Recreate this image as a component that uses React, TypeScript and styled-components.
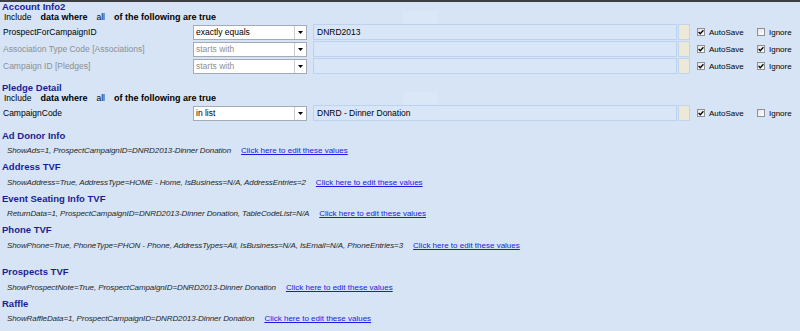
import React from "react";
import styled, { createGlobalStyle } from "styled-components";

const GlobalStyle = createGlobalStyle`
  html, body { margin: 0; padding: 0; background: #d6e4f5; }
  body { font-family: "Liberation Sans", Arial, sans-serif; font-size: 8px; color: #000; }
`;

const Page = styled.div`
  width: 800px;
  height: 331px;
  box-sizing: border-box;
  border-top: 2px solid #3d3f42;
  background: #d6e4f5;
  overflow: hidden;
  display: flex;
  flex-direction: column;
`;

const Title = styled.div<{ $h: number; $mt?: number }>`
  height: ${(p) => p.$h}px;
  line-height: ${(p) => p.$h}px;
  margin-top: ${(p) => p.$mt ?? 0}px;
  padding-left: 2px;
  font-size: 9.5px;
  font-weight: bold;
  color: #1c1c96;
  white-space: nowrap;
`;

const IncludeRow = styled.div`
  height: 10px;
  line-height: 10px;
  display: flex;
  align-items: center;
  gap: 9px;
  padding-left: 4px;
  margin-bottom: 2px;
  font-size: 8.5px;
  white-space: nowrap;
`;

const Strong = styled.span`
  font-weight: bold;
  font-size: 9px;
`;

const GhostPatch = styled.span`
  margin-left: 178px;
  width: 35px;
  height: 13px;
  background: #d9e7f6;
`;

const FilterList = styled.div`
  display: flex;
  flex-direction: column;
  gap: 1px;
`;

const Row = styled.div`
  height: 16px;
  display: flex;
  align-items: center;
`;

const Label = styled.div<{ $disabled?: boolean }>`
  width: 193px;
  box-sizing: border-box;
  padding-left: 3px;
  font-size: 8.5px;
  color: ${(p) => (p.$disabled ? "#8d8f93" : "#000")};
  white-space: nowrap;
`;

const Select = styled.div`
  width: 114px;
  height: 15px;
  box-sizing: border-box;
  border: 1px solid #a4abb6;
  background: #fff;
  display: flex;
`;

const SelectText = styled.div<{ $disabled?: boolean }>`
  flex: 1;
  padding-left: 2px;
  line-height: 13px;
  font-size: 8.5px;
  color: ${(p) => (p.$disabled ? "#8d8f93" : "#000")};
  white-space: nowrap;
`;

const SelectButton = styled.div`
  width: 11px;
  border-left: 1px solid #c9cdd3;
  display: flex;
  align-items: center;
  justify-content: center;
`;

const TextBox = styled.div`
  flex: 1;
  height: 16px;
  margin-left: 6px;
  box-sizing: border-box;
  border: 1px solid #bdd2ef;
  background: #d9e6f7;
  padding-left: 3px;
  line-height: 14px;
  font-size: 8.5px;
  white-space: nowrap;
`;

const Swatch = styled.div`
  width: 12px;
  height: 16px;
  margin-left: 1px;
  box-sizing: border-box;
  border: 1px solid #c2d4ec;
  background: #ece9d8;
`;

const Checks = styled.div`
  width: 103px;
  margin-left: 7px;
  display: flex;
  align-items: center;
`;

const CheckItem = styled.div<{ $w?: number }>`
  width: ${(p) => (p.$w ? `${p.$w}px` : "auto")};
  display: flex;
  align-items: center;
  gap: 4px;
  font-size: 8px;
  white-space: nowrap;
`;

const Box = styled.span`
  width: 8px;
  height: 8px;
  box-sizing: border-box;
  border: 1px solid #8f9093;
  background: linear-gradient(135deg, #e4e4e4, #ffffff);
  display: flex;
  align-items: center;
  justify-content: center;
`;

const Block = styled.div<{ $mt?: number }>`
  margin-top: ${(p) => p.$mt ?? 0}px;
`;

const Desc = styled.div`
  height: 16.5px;
  display: flex;
  align-items: center;
  gap: 10px;
  padding-left: 7px;
  white-space: nowrap;
`;

const DescText = styled.span`
  font-style: italic;
  font-size: 8px;
  letter-spacing: -0.1px;
  color: #262626;
`;

const EditLink = styled.a`
  font-size: 8px;
  color: #1a1ae6;
  text-decoration: underline;
  cursor: pointer;
`;

const Check = ({ on }: { on: boolean }) => (
  <Box>
    {on && (
      <svg width="6" height="6" viewBox="0 0 6 6">
        <path d="M0.6 3 L2.3 4.7 L5.4 1.2" fill="none" stroke="#000" strokeWidth="1.3" />
      </svg>
    )}
  </Box>
);

const Arrow = () => (
  <svg width="5" height="3" viewBox="0 0 5 3">
    <path d="M0 0 H5 L2.5 3 Z" fill="#000" />
  </svg>
);

type Filter = { label: string; op: string; value: string; disabled?: boolean; ignore: boolean };

const FilterRow = ({ f }: { f: Filter }) => (
  <Row>
    <Label $disabled={f.disabled}>{f.label}</Label>
    <Select>
      <SelectText $disabled={f.disabled}>{f.op}</SelectText>
      <SelectButton>
        <Arrow />
      </SelectButton>
    </Select>
    <TextBox>{f.value}</TextBox>
    <Swatch />
    <Checks>
      <CheckItem $w={60}>
        <Check on={true} />
        AutoSave
      </CheckItem>
      <CheckItem>
        <Check on={f.ignore} />
        Ignore
      </CheckItem>
    </Checks>
  </Row>
);

const Include = () => (
  <IncludeRow>
    <span>Include</span>
    <Strong>data where</Strong>
    <span>all</span>
    <Strong>of the following are true</Strong>
    <GhostPatch />
  </IncludeRow>
);

const account: Filter[] = [
  { label: "ProspectForCampaignID", op: "exactly equals", value: "DNRD2013", ignore: false },
  { label: "Association Type Code [Associations]", op: "starts with", value: "", disabled: true, ignore: true },
  { label: "Campaign ID [Pledges]", op: "starts with", value: "", disabled: true, ignore: true },
];

const tvfs: { title: string; text: string; mt?: number }[] = [
  { title: "Ad Donor Info", text: "ShowAds=1, ProspectCampaignID=DNRD2013-Dinner Donation", mt: 6.5 },
  { title: "Address TVF", text: "ShowAddress=True, AddressType=HOME - Home, IsBusiness=N/A, AddressEntries=2" },
  { title: "Event Seating Info TVF", text: "ReturnData=1, ProspectCampaignID=DNRD2013-Dinner Donation, TableCodeList=N/A" },
  {
    title: "Phone TVF",
    text: "ShowPhone=True, PhoneType=PHON - Phone, AddressTypes=All, IsBusiness=N/A, IsEmail=N/A, PhoneEntries=3",
  },
  { title: "Prospects TVF", text: "ShowProspectNote=True, ProspectCampaignID=DNRD2013-Dinner Donation", mt: 10.5 },
  { title: "Raffle", text: "ShowRaffleData=1, ProspectCampaignID=DNRD2013-Dinner Donation" },
];

export default function App() {
  return (
    <Page>
      <GlobalStyle />
      <Title $h={10}>Account Info2</Title>
      <Include />
      <FilterList>
        {account.map((f) => (
          <FilterRow key={f.label} f={f} />
        ))}
      </FilterList>
      <Title $h={11} $mt={8}>
        Pledge Detail
      </Title>
      <Include />
      <FilterList>
        <FilterRow f={{ label: "CampaignCode", op: "in list", value: "DNRD - Dinner Donation", ignore: false }} />
      </FilterList>
      {tvfs.map((t) => (
        <Block key={t.title} $mt={t.mt}>
          <Title $h={15}>{t.title}</Title>
          <Desc>
            <DescText>{t.text}</DescText>
            <EditLink>Click here to edit these values</EditLink>
          </Desc>
        </Block>
      ))}
    </Page>
  );
}
